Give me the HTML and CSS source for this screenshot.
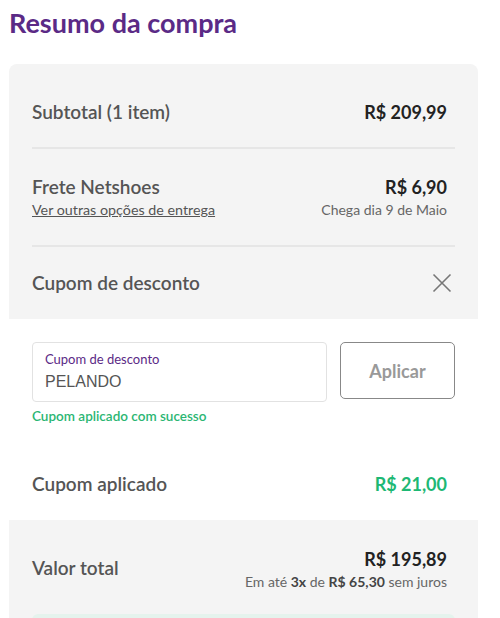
FILE: index.html
```html
<!DOCTYPE html>
<html lang="pt-BR">
  <head>
    <meta charset="UTF-8" />
    <meta name="viewport" content="width=device-width, initial-scale=1.0" />
    <title>Resumo da compra</title>
    <link rel="stylesheet" href="styles.css">
  </head>
  <body>
    <h1 class="title">Resumo da compra</h1>
    <div class="summary">
      <div class="block">
        <div class="row row-subtotal">
          <span class="label">Subtotal (1 item)</span>
          <span class="value">R$ 209,99</span>
        </div>
        <div class="divider"></div>
        <div class="row row-frete">
          <div class="col">
            <span class="label">Frete Netshoes</span>
            <a class="link" href="#">Ver outras opções de entrega</a>
          </div>
          <div class="col col-right">
            <span class="value">R$ 6,90</span>
            <span class="note">Chega dia 9 de Maio</span>
          </div>
        </div>
        <div class="divider"></div>
        <div class="row row-cupom">
          <span class="label">Cupom de desconto</span>
          <svg class="close" width="20" height="20" viewBox="0 0 20 20">
            <path d="M1.5 1.5 L18.5 18.5 M18.5 1.5 L1.5 18.5" stroke="#777" stroke-width="1.6" fill="none" />
          </svg>
        </div>
      </div>
      <div class="block block-white">
        <div class="coupon-form">
          <label class="field">
            <span class="field-label">Cupom de desconto</span>
            <input class="field-input" type="text" value="PELANDO" />
          </label>
          <button class="apply">Aplicar</button>
        </div>
        <div class="success">Cupom aplicado com sucesso</div>
        <div class="row row-applied">
          <span class="label">Cupom aplicado</span>
          <span class="value green">R$ 21,00</span>
        </div>
      </div>
      <div class="block">
        <div class="row row-total">
          <span class="label">Valor total</span>
          <div class="col col-right">
            <span class="value">R$ 195,89</span>
            <span class="note">Em até <b>3x</b> de <b>R$ 65,30</b> sem juros</span>
          </div>
        </div>
        <div class="banner"></div>
      </div>
    </div>
  </body>
</html>
```

FILE: styles.css
```css
body {
  margin: 0;
  padding: 0 22px 0 9px;
  font-family: Lato, "Noto Sans", sans-serif;
  color: #555;
  background: #fff;
}
.title {
  margin: 6px 0 0;
  height: 58px;
  font-size: 27px;
  font-weight: 700;
  color: #5b2a86;
}
.summary {
  background: #f4f4f4;
  border-radius: 8px 8px 0 0;
}
.block {
  padding: 0 23px;
}
.block-white {
  background: #fff;
  padding-top: 23px;
}
.row {
  display: flex;
  justify-content: space-between;
  align-items: center;
  padding-right: 8px !important;
}
.col {
  display: flex;
  flex-direction: column;
}
.col-right {
  align-items: flex-end;
}
.label {
  font-size: 19px;
  line-height: 24px;
  font-weight: 600;
  color: #555;
}
.value {
  font-size: 18px;
  line-height: 24px;
  font-weight: 700;
  color: #222;
}
.green {
  color: #1db874;
}
.note {
  font-size: 14px;
  line-height: 22px;
  color: #666;
}
.note b {
  color: #444;
}
.link {
  font-size: 14.3px;
  line-height: 22px;
  color: #555;
}
.divider {
  height: 2px;
  background: #e6e6e6;
}
.row-subtotal {
  padding: 36px 0 23px;
}
.row-frete {
  padding: 26px 0 24px;
}
.row-cupom {
  padding: 24px 0;
}
.close {
  margin-right: -5px;
}
.coupon-form {
  display: flex;
  gap: 13px;
  align-items: flex-start;
}
.field {
  flex: 1;
  display: flex;
  flex-direction: column;
  height: 60px;
  padding: 8px 12px 0;
  box-sizing: border-box;
  border: 1px solid #e2e2e2;
  border-radius: 4px;
}
.field-label {
  font-size: 13px;
  line-height: 16px;
  color: #5b2a86;
}
.field-input {
  border: 0;
  padding: 0;
  margin-top: 6px;
  font-family: "Liberation Sans", Arial, sans-serif;
  font-size: 16px;
  color: #555;
  outline: none;
  background: transparent;
}
.apply {
  width: 115px;
  height: 57px;
  border: 1px solid #888;
  border-radius: 5px;
  background: #fff;
  font-family: Lato, "Noto Sans", sans-serif;
  font-size: 18px;
  font-weight: 700;
  color: #999;
}
.success {
  margin-top: 5px;
  font-size: 13.5px;
  line-height: 18px;
  font-weight: 600;
  color: #2bb673;
}
.row-applied {
  padding: 47px 0 24px;
}
.row-total {
  padding: 27px 0 21px;
}
.row-total .label {
  margin-bottom: 4px;
}
.banner {
  height: 20px;
  background: #e5f3ed;
  border-radius: 6px 6px 0 0;
}
```
